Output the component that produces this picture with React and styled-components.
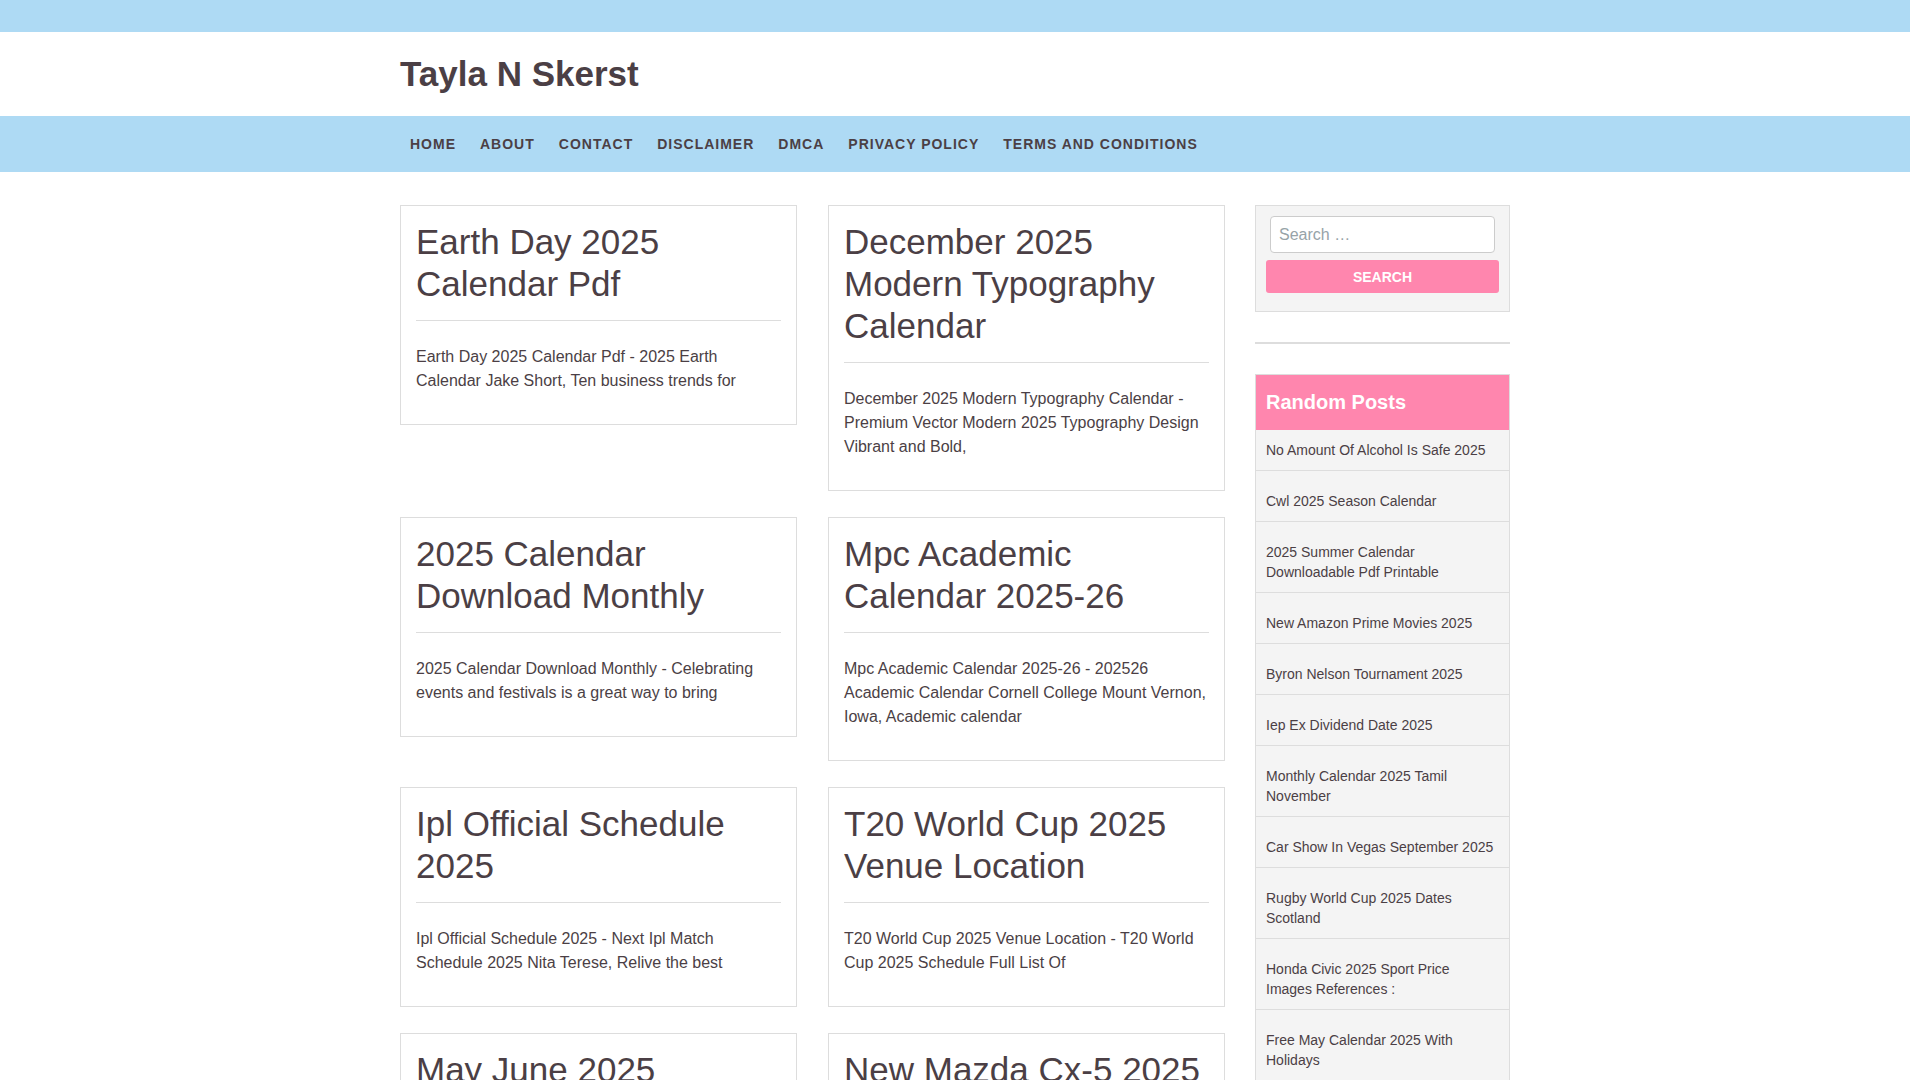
import React from "react";
import styled, { createGlobalStyle } from "styled-components";

const posts = [
  {
    title: "Earth Day 2025 Calendar Pdf",
    text: "Earth Day 2025 Calendar Pdf - 2025 Earth Calendar Jake Short, Ten business trends for",
  },
  {
    title: "December 2025 Modern Typography Calendar",
    text: "December 2025 Modern Typography Calendar - Premium Vector Modern 2025 Typography Design Vibrant and Bold,",
  },
  {
    title: "2025 Calendar Download Monthly",
    text: "2025 Calendar Download Monthly - Celebrating events and festivals is a great way to bring",
  },
  {
    title: "Mpc Academic Calendar 2025-26",
    text: "Mpc Academic Calendar 2025-26 - 202526 Academic Calendar Cornell College Mount Vernon, Iowa, Academic calendar",
  },
  {
    title: "Ipl Official Schedule 2025",
    text: "Ipl Official Schedule 2025 - Next Ipl Match Schedule 2025 Nita Terese, Relive the best",
  },
  {
    title: "T20 World Cup 2025 Venue Location",
    text: "T20 World Cup 2025 Venue Location - T20 World Cup 2025 Schedule Full List Of",
  },
  {
    title: "May June 2025 Calendar Printable",
    text: "May June 2025 Calendar Printable - Free Printable May June 2025 Calendar Templates, Plan your",
  },
  {
    title: "New Mazda Cx-5 2025 Release Date",
    text: "New Mazda Cx-5 2025 Release Date - 2025 Mazda CX-5 Review, Pricing, and Specs, The",
  },
  {
    title: "Lunar Calendar 2025 Chinese",
    text: "Lunar Calendar 2025 Chinese - Chinese Lunar Calendar 2025 Printable, Celebrate the new",
  },
  {
    title: "Nfl Schedule 2025 Week 1",
    text: "Nfl Schedule 2025 Week 1 - NFL Week 1 Schedule 2025 Full List of Games, Kickoff",
  },
];

const randomPosts = [
  "No Amount Of Alcohol Is Safe 2025",
  "Cwl 2025 Season Calendar",
  "2025 Summer Calendar Downloadable Pdf Printable",
  "New Amazon Prime Movies 2025",
  "Byron Nelson Tournament 2025",
  "Iep Ex Dividend Date 2025",
  "Monthly Calendar 2025 Tamil November",
  "Car Show In Vegas September 2025",
  "Rugby World Cup 2025 Dates Scotland",
  "Honda Civic 2025 Sport Price Images References :",
  "Free May Calendar 2025 With Holidays",
  "Fiscal Year 2025 Calendar Usps",
  "Uk Bank Holidays 2025 Calendar",
  "Kansas State Football Schedule 2025",
];

const menu = [
  "Home",
  "About",
  "Contact",
  "Disclaimer",
  "DMCA",
  "Privacy Policy",
  "Terms and Conditions",
];

const GlobalStyle = createGlobalStyle`
  body {
    margin: 0;
    /* leaves the strip where the reference shows its scrollbar */
    padding-right: 10px;
    background: #ffffff;
    color: #4b3f45;
    font-family: "Liberation Sans", Arial, sans-serif;
  }
  * {
    box-sizing: border-box;
  }
`;

const TopBar = styled.div`
  height: 32px;
  background-color: #aedaf4;
`;

const Container = styled.div`
  width: 1110px;
  margin: 0 auto;
`;

const Header = styled.header`
  padding: 22px 0;
  background: #ffffff;
`;

const SiteTitle = styled.h1`
  margin: 0;
  font-size: 35px;
  line-height: 40px;
  font-weight: bold;
  color: #4b3f45;
`;

const NavBar = styled.nav`
  background-color: #aedaf4;
`;

const NavList = styled.ul`
  display: flex;
  gap: 4px;
  margin: 0;
  padding: 0;
  list-style: none;
`;

const NavLink = styled.a`
  display: block;
  padding: 0 10px;
  line-height: 56px;
  font-size: 14px;
  font-weight: bold;
  letter-spacing: 1px;
  text-transform: uppercase;
  color: #4b3f45;
  text-decoration: none;
`;

const Layout = styled.div`
  display: grid;
  grid-template-columns: 825px 255px;
  column-gap: 30px;
  align-items: start;
  padding: 33px 0 60px;
`;

const PostGrid = styled.div`
  display: grid;
  grid-template-columns: 1fr 1fr;
  column-gap: 31px;
  row-gap: 26px;
  align-items: start;
`;

const Card = styled.article`
  border: 1px solid #dddddd;
  padding: 15px;
  background: #ffffff;
`;

const CardTitle = styled.h2`
  margin: 0;
  font-size: 35px;
  line-height: 42px;
  font-weight: normal;
  color: #4b3f45;
`;

const Divider = styled.hr`
  margin: 15px 0 24px;
  border: 0;
  border-top: 1px solid #dddddd;
`;

const Excerpt = styled.p`
  margin: 0 0 16px;
  font-size: 16px;
  line-height: 24px;
  color: #4b3f45;
`;

const Sidebar = styled.aside`
  display: flex;
  flex-direction: column;
`;

const SearchBox = styled.form`
  display: flex;
  flex-direction: column;
  gap: 7px;
  padding: 10px 10px 18px;
  background: #f4f4f4;
  border: 1px solid #dddddd;
`;

const SearchInput = styled.input`
  margin: 0 4px;
  height: 37px;
  padding: 0 8px;
  border: 1px solid #cccccc;
  border-radius: 4px;
  background: #ffffff;
  font-family: "Liberation Sans", Arial, sans-serif;
  font-size: 16px;
  color: #4b3f45;
  &::placeholder {
    color: #97a3a8;
  }
`;

const SearchButton = styled.button`
  height: 33px;
  border: 0;
  border-radius: 3px;
  background: #ff86ae;
  color: #ffffff;
  font-family: "Liberation Sans", Arial, sans-serif;
  font-size: 14px;
  font-weight: bold;
  text-transform: uppercase;
`;

const Rule = styled.div`
  margin: 30px 0;
  height: 2px;
  background: #dddddd;
`;

const Widget = styled.section`
  border: 1px solid #dddddd;
  background: #f4f4f4;
`;

const WidgetTitle = styled.h3`
  margin: 0;
  padding: 15px 10px;
  font-size: 20px;
  line-height: 25px;
  font-weight: bold;
  color: #ffffff;
  background: #ff86ae;
`;

const PostList = styled.ul`
  margin: 0;
  padding: 0;
  list-style: none;
`;

const PostItem = styled.li`
  padding: 20px 10px 10px;
  border-bottom: 1px solid #dddddd;
  font-size: 14px;
  line-height: 20px;
  &:first-child {
    padding-top: 10px;
  }
  & a {
    color: #4b3f45;
    text-decoration: none;
  }
`;

const Footer = styled.footer`
  padding: 30px 0;
  background-color: #aedaf4;
  font-size: 14px;
  text-align: center;
  color: #4b3f45;
`;

const App = () => {
  return (
    <>
      <GlobalStyle />
      <TopBar />
      <Header>
        <Container>
          <SiteTitle>Tayla N Skerst</SiteTitle>
        </Container>
      </Header>
      <NavBar>
        <Container>
          <NavList>
            {menu.map((item) => (
              <li key={item}>
                <NavLink href="#">{item}</NavLink>
              </li>
            ))}
          </NavList>
        </Container>
      </NavBar>
      <Container>
        <Layout>
          <PostGrid>
            {posts.map((post) => (
              <Card key={post.title}>
                <CardTitle>{post.title}</CardTitle>
                <Divider />
                <Excerpt>{post.text}</Excerpt>
              </Card>
            ))}
          </PostGrid>
          <Sidebar>
            <SearchBox onSubmit={(e) => e.preventDefault()}>
              <SearchInput type="search" placeholder="Search …" />
              <SearchButton type="submit">Search</SearchButton>
            </SearchBox>
            <Rule />
            <Widget>
              <WidgetTitle>Random Posts</WidgetTitle>
              <PostList>
                {randomPosts.map((item) => (
                  <PostItem key={item}>
                    <a href="#">{item}</a>
                  </PostItem>
                ))}
              </PostList>
            </Widget>
          </Sidebar>
        </Layout>
      </Container>
      <Footer>Copyright © 2025 Tayla N Skerst. All rights reserved.</Footer>
    </>
  );
};

export default App;
